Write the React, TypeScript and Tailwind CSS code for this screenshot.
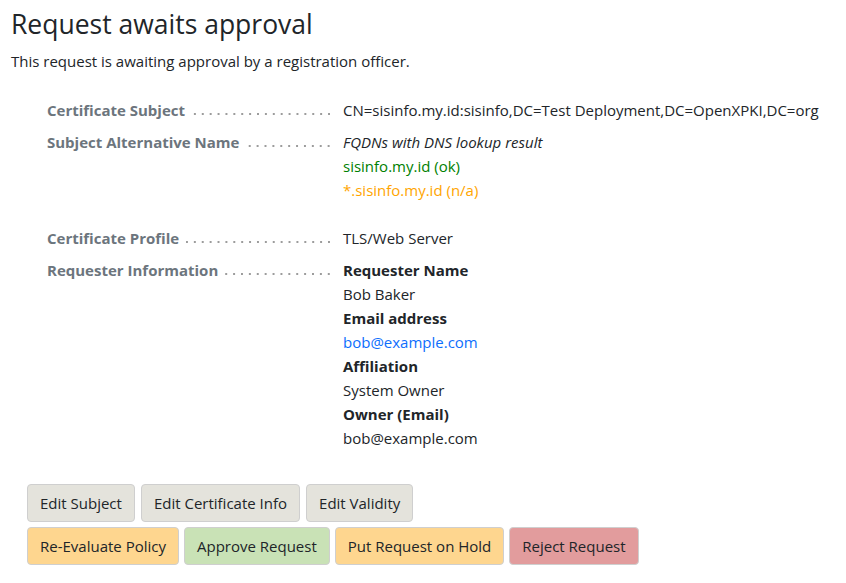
import React from "react";

function Field({ label, children }: { label: string; children: React.ReactNode }) {
  return (
    <div className="flex">
      <div className="flex w-[286px] shrink-0">
        <span className="shrink-0 font-bold text-[#6c757d]">{label}</span>
        {/* dotted leader */}
        <span className="mt-[14px] ml-[7px] h-[4px] flex-1 bg-[radial-gradient(circle,#9c9c9c_0.9px,transparent_1.3px)] bg-[length:7.9px_4px] bg-right bg-repeat-x" />
      </div>
      <div className="ml-[10px] min-w-0 flex-1">{children}</div>
    </div>
  );
}

function Btn({ label, tone }: { label: string; tone: "gray" | "orange" | "green" | "red" }) {
  const colors = {
    gray: "bg-[#e4e3dc]",
    orange: "bg-[#fed68f]",
    green: "bg-[#c9e2b6]",
    red: "bg-[#e29c9d]",
  };
  return (
    <button
      type="button"
      className={
        "rounded-[4px] border border-[#cfcfcf] px-3 py-[6px] leading-6 text-[#212529] " +
        colors[tone]
      }
    >
      {label}
    </button>
  );
}

export default function App() {
  return (
    <div
      className="min-h-screen bg-white px-[11px] pt-[9px] text-[15px] leading-6 text-[#212529]"
      style={{ fontFamily: "'Segoe UI', 'Open Sans', 'Noto Sans', sans-serif" }}
    >
      <h1 className="text-[26.5px] leading-[1.2]">Request awaits approval</h1>
      <p className="mt-[8px]">This request is awaiting approval by a registration officer.</p>

      <div className="mt-[25px] flex flex-col gap-2 pl-[36px]">
        <Field label="Certificate Subject">
          CN=sisinfo.my.id:sisinfo,DC=Test Deployment,DC=OpenXPKI,DC=org
        </Field>
        <Field label="Subject Alternative Name">
          <div className="mb-4">
            <div className="italic">FQDNs with DNS lookup result</div>
            <div className="text-[#008000]">sisinfo.my.id (ok)</div>
            <div className="text-[#ffa500]">*.sisinfo.my.id (n/a)</div>
          </div>
        </Field>
        <Field label="Certificate Profile">TLS/Web Server</Field>
        <Field label="Requester Information">
          <div className="font-bold">Requester Name</div>
          <div>Bob Baker</div>
          <div className="font-bold">Email address</div>
          <div>
            <a href="#" className="text-[#0d6efd]">
              bob@example.com
            </a>
          </div>
          <div className="font-bold">Affiliation</div>
          <div>System Owner</div>
          <div className="font-bold">Owner (Email)</div>
          <div>bob@example.com</div>
        </Field>
      </div>

      <div className="mt-[34px] flex flex-col gap-[5px] pl-[16px]">
        <div className="flex flex-wrap gap-[6px]">
          <Btn label="Edit Subject" tone="gray" />
          <Btn label="Edit Certificate Info" tone="gray" />
          <Btn label="Edit Validity" tone="gray" />
        </div>
        <div className="flex flex-wrap gap-[5px]">
          <Btn label="Re-Evaluate Policy" tone="orange" />
          <Btn label="Approve Request" tone="green" />
          <Btn label="Put Request on Hold" tone="orange" />
          <Btn label="Reject Request" tone="red" />
        </div>
      </div>
    </div>
  );
}
